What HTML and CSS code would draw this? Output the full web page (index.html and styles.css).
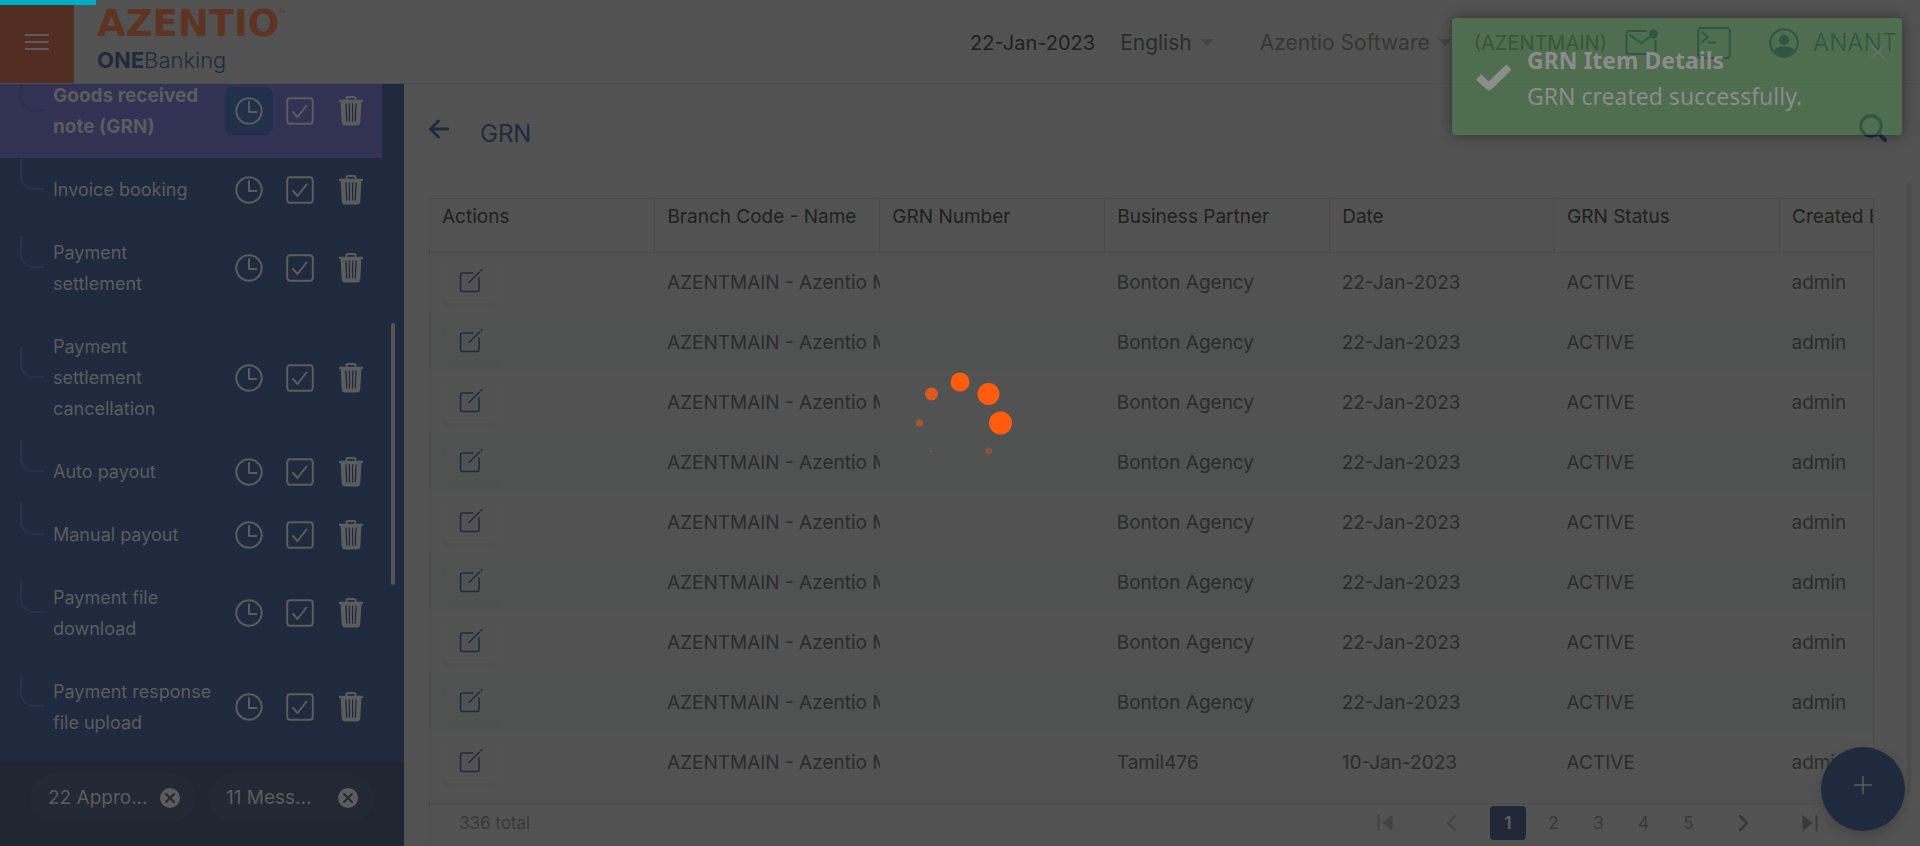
FILE: index.html
```html
<!DOCTYPE html>
<html lang="en">
<head>
<meta charset="utf-8">
<title>GRN - ONEBanking</title>
<link rel="stylesheet" href="styles.css">
</head>
<body>
<svg class="defs" aria-hidden="true">
  <symbol id="clock" viewBox="0 0 28 28"><circle cx="14" cy="14" r="12.7"/><path d="M14 5v10h7.5"/></symbol>
  <symbol id="check" viewBox="0 0 28 28"><rect x="1.2" y="1.2" width="25.600" height="25.600" rx="3"/><path d="M7 15l4.500 5L20.500 8.500"/></symbol>
  <symbol id="trash" viewBox="0 0 28 32"><path d="M9.500 5V3.500Q9.500 2 11 2h6q1.500 0 1.500 1.500V5" fill="none" stroke="currentColor" stroke-width="2"/><path d="M2 4.800h24v2.200h-1.600L23.300 27q-.3 3.500-3.500 3.500H8.200Q5 30.500 4.700 27L3.600 7H2z" fill="currentColor" stroke="none"/><path d="M9 9l.7 17M12.400 9v17M15.600 9v17M19 9l-.7 17" class="slots"/></symbol>
  <symbol id="edit" viewBox="0 0 24 24"><path d="M14 4H3.500Q1.500 4 1.500 6v14.500q0 2 2 2H18q2 0 2-2V9M10 13.500L20.500 3M22 1.500l1-1"/></symbol>
  <symbol id="close" viewBox="0 0 22 22"><circle cx="11" cy="11" r="11"/><path d="M7 7l8 8M15 7l-8 8"/></symbol>
</svg>
<div class="progress"></div>
<header class="topbar">
  <button class="menu" aria-label="Menu"><svg width="24" height="18" viewBox="0 0 24 18"><path d="M0 2h24M0 9h24M0 16h24"/></svg></button>
  <div class="brand">
    <div class="wordmark">AZENTIO<sup>™</sup></div>
    <div class="product"><b>ONE</b>Banking</div>
  </div>
  <div class="session">
    <span class="date">22-Jan-2023</span>
    <button class="language">English <i class="caret"></i></button>
    <button class="company">Azentio Software <i class="caret"></i></button>
    <span class="branch">(AZENTMAIN)</span>
    <button class="tool" aria-label="Messages"><svg width="34" height="28" viewBox="0 0 34 28"><path d="M21 2H4Q1.500 2 1.500 4.500v18Q1.500 25 4 25h24q2.500 0 2.500-2.500V12M5 6l11 8 8-5.500"/><circle cx="28.500" cy="5" r="4.500" fill="currentColor" stroke="none"/></svg></button>
    <button class="tool terminal" aria-label="Terminal"><svg width="34" height="34" viewBox="0 0 34 34"><rect x="1.200" y="2" width="31.600" height="30" rx="3"/><path d="M5 6l6 5-6 5M12 16.500h6"/></svg></button>
    <button class="user"><svg width="30" height="30" viewBox="0 0 30 30"><circle cx="15" cy="15" r="13.700"/><circle cx="15" cy="12" r="5" fill="currentColor" stroke="none"/><path d="M4.500 22Q15 14.500 25.500 22 15 34.500 4.500 22z" fill="currentColor" stroke="none"/></svg>ANANT</button>
  </div>
</header>
<div class="shell">
  <nav class="sidebar">
    <ul class="menu-list" id="menu-list"></ul>
    <div class="scroll-thumb"></div>
    <div class="chips">
      <div class="chip"><span>22 Appro...</span><button aria-label="Close approvals"><svg width="22" height="22"><use href="#close"/></svg></button></div>
      <div class="chip"><span>11 Mess...</span><button aria-label="Close messages"><svg width="22" height="22"><use href="#close"/></svg></button></div>
    </div>
  </nav>
  <main class="content">
    <div class="page-head">
      <button aria-label="Back"><svg width="20" height="20" viewBox="0 0 20 20"><path d="M19 10H2M9.500 2L1.500 10l8 8" stroke-width="2.800"/></svg></button>
      <h1>GRN</h1>
      <button class="search" aria-label="Search"><svg width="28" height="28" viewBox="0 0 28 28"><circle cx="12" cy="12" r="10.200" stroke-width="3"/><path d="M19.500 19.500l6.500 6.500" stroke-width="4"/></svg></button>
    </div>
    <div class="grid-card">
      <table>
        <thead><tr><th>Actions</th><th>Branch Code - Name</th><th>GRN Number</th><th>Business Partner</th><th>Date</th><th>GRN Status</th><th>Created By</th></tr></thead>
        <tbody id="rows"></tbody>
      </table>
      <div class="pager">
        <span class="total">336 total</span>
        <button class="off" aria-label="First page"><svg width="16" height="16" viewBox="0 0 16 16"><path d="M1.500 0v16" stroke-width="2"/><path d="M15.500 0v16L5 8z" fill="currentColor" stroke="none"/></svg></button>
        <button class="off step" aria-label="Previous page"><svg width="10" height="16" viewBox="0 0 10 16"><path d="M9 1L2 8l7 7"/></svg></button>
        <button class="current">1</button>
        <button class="num">2</button>
        <button class="num">3</button>
        <button class="num">4</button>
        <button class="num">5</button>
        <button class="step next" aria-label="Next page"><svg width="10" height="16" viewBox="0 0 10 16"><path d="M1 1l7 7-7 7" stroke-width="2.500"/></svg></button>
        <button aria-label="Last page"><svg width="16" height="16" viewBox="0 0 16 16"><path d="M14.500 0v16" stroke-width="2"/><path d="M.5 0v16L11 8z" fill="currentColor" stroke="none"/></svg></button>
      </div>
    </div>
    <div class="page-thumb"></div>
  </main>
</div>
<button class="fab" aria-label="Add"><svg width="18" height="18" viewBox="0 0 18 18"><path d="M9 0v18M0 9h18"/></svg></button>
<div class="toast" role="status">
  <svg class="tick" width="38" height="28" viewBox="0 0 38 28"><path d="M3.500 14l10.500 9.500L34 4" stroke-width="7.500" stroke-linecap="butt"/></svg>
  <div class="toast-text"><strong>GRN Item Details</strong><span>GRN created successfully.</span></div>
  <button aria-label="Dismiss"><svg width="16" height="16" viewBox="0 0 16 16"><path d="M2 2l12 12M14 2L2 14"/></svg></button>
</div>
<svg class="spinner" width="94" height="94" viewBox="-47 -47 94 94">
  <circle cx="0" cy="-41" r="9.500"/><circle cx="28.500" cy="-29" r="11"/><circle cx="40.500" cy="0" r="11.500"/>
  <circle cx="-28.500" cy="-29" r="6.500" opacity=".8"/><circle cx="-40.500" cy="0" r="3.500" opacity=".5"/><circle cx="-29" cy="28" r="1" opacity=".3"/><circle cx="28.500" cy="28" r="3.500" opacity=".3"/>
</svg>
<script src="app.js"></script>
</body>
</html>
```
FILE: app.js
```js
const items = ["Goods received note (GRN)", "Invoice booking", "Payment settlement", "Payment settlement cancellation", "Auto payout", "Manual payout", "Payment file download", "Payment response file upload"];
const icon = (name, w, h) => `<svg width="${w}" height="${h}"><use href="#${name}"/></svg>`;
document.getElementById("menu-list").innerHTML = items.map((label, i) => `
  <li class="${i === 0 ? "active" : ""}"><i class="branch-line"></i><a href="#">${label}</a>
    <button class="clock" aria-label="Pending">${icon("clock", 28, 28)}</button>
    <button aria-label="Approve">${icon("check", 28, 28)}</button>
    <button aria-label="Delete">${icon("trash", 28, 32)}</button></li>`).join("");

const rows = Array.from({ length: 8 }, () => ["Bonton Agency", "22-Jan-2023"]);
rows.push(["Tamil476", "10-Jan-2023"]);
document.getElementById("rows").innerHTML = rows.map(([partner, date]) => `
  <tr><td><button class="edit" aria-label="Edit">${icon("edit", 24, 24)}</button></td>
  <td>AZENTMAIN - Azentio Main</td><td></td><td>${partner}</td><td>${date}</td><td>ACTIVE</td><td>admin</td></tr>`).join("");
```
FILE: styles.css
```css
:root {
  --page: #525252;
  --navy: #1f2a3f;
  --line: #4a4a4a;
  --light: #5c5c5c;
}
* { box-sizing: border-box; }
body {
  margin: 0;
  height: 100vh;
  display: flex;
  flex-direction: column;
  overflow: hidden;
  background: var(--page);
  color: #2b2b2b;
  font: 19px/24px Inter, "Liberation Sans", sans-serif;
}
button {
  padding: 0;
  border: 0;
  background: none;
  color: inherit;
  font: inherit;
  display: flex;
  align-items: center;
  justify-content: center;
}
svg { display: block; fill: none; stroke: currentColor; stroke-width: 2; stroke-linecap: round; stroke-linejoin: round; }
.defs { position: absolute; width: 0; height: 0; }
.progress { position: absolute; top: 0; left: 0; width: 5%; height: 5px; background: #00adc6; z-index: 3; }

.topbar { flex: none; height: 84px; display: flex; border-bottom: 1px solid #4d4d4d; }
.menu { width: 74px; background: #512d22; color: var(--light); }
.menu svg { stroke-linecap: butt; }
.brand { padding: 6px 0 0 23px; }
.wordmark { font: bold 37px/36px "DejaVu Sans", sans-serif; color: #5f3321; white-space: nowrap; }
.wordmark sup { font: 10px/10px Inter, sans-serif; vertical-align: 18px; }
.product { font-weight: 300; font-size: 22px; line-height: 36px; color: var(--navy); }
.product b { font-weight: 700; }
.session { flex: 1; display: flex; align-items: center; justify-content: flex-end; padding: 2px 23px 0 0; white-space: nowrap; }
.date { font-size: 20px; color: #202020; margin-right: 25px; }
.language { font-size: 21px; margin-right: 46px; }
.company { font-size: 21px; color: #363636; margin-right: 22px; }
.caret { border: 7px solid transparent; border-top-color: #444; border-bottom: 0; margin-left: 8px; }
.branch { font-size: 20px; margin-right: 18px; }
.tool, .user { color: var(--navy); }
.tool { margin-right: 38px; }
.user { gap: 14px; font-size: 24px; font-weight: 300; }

.shell { flex: 1; min-height: 0; display: flex; }
.sidebar { position: relative; width: 404px; flex: none; display: flex; flex-direction: column; background: var(--navy); color: var(--light); }
.menu-list { flex: 1; min-height: 0; margin: 0; padding: 0 22px 8px 0; list-style: none; display: flex; flex-direction: column; justify-content: flex-end; overflow: hidden; }
.menu-list li { position: relative; flex: none; display: flex; align-items: center; padding: 16px 4px 16px 53px; }
.menu-list a { flex: 1; padding-right: 8px; color: inherit; text-decoration: none; line-height: 31px; font-size: 18px; }
.menu-list button { width: 48px; height: 48px; margin: -9px 3px -9px 0; border-radius: 8px; flex: none; }
.menu-list .active { background: #323254; font-weight: 700; }
.menu-list .active a { font-size: 19px; }
.active .clock { background: #21304b; }
.slots { stroke: var(--navy); stroke-width: 1.3; }
.branch-line { position: absolute; left: 20px; bottom: 50%; width: 24px; height: 32px; border: solid #283149; border-width: 0 0 2px 2px; border-radius: 0 0 0 14px; }
.scroll-thumb { position: absolute; right: 9px; top: 239px; width: 4px; height: 262px; border-radius: 2px; background: #555; }
.chips { flex: none; height: 84px; display: flex; align-items: flex-start; gap: 12px; padding: 12px 30px; background: #202632; }
.chip { flex: 1; height: 48px; display: flex; align-items: center; justify-content: space-between; padding: 0 15px 0 18px; border-radius: 24px; background: #222935; }
.chip svg { fill: var(--light); stroke: none; }
.chip use { stroke: #222935; stroke-width: 2; }

.content { position: relative; flex: 1; min-width: 0; display: flex; flex-direction: column; padding: 0 46px 0 25px; }
.page-head { height: 114px; flex: none; display: flex; align-items: center; padding-bottom: 14px; color: var(--navy); }
.page-head button { margin-bottom: 11px; }
.page-head h1 { flex: 1; margin: 0 0 0 31px; font-weight: 400; font-size: 24px; line-height: 28px; }
.page-head .search { margin: 0 -13px 12px 0; }
.grid-card { flex: 1; min-height: 0; display: flex; flex-direction: column; border: 1px solid var(--line); border-bottom: 0; overflow: hidden; }
table { width: 1575px; flex: none; table-layout: fixed; border-collapse: collapse; margin-bottom: 11px; }
th { height: 53px; padding: 6px 0 4px 12px; vertical-align: top; text-align: left; font-weight: 400; color: #202020; border: solid var(--line); border-width: 0 1px 1px 0; white-space: nowrap; overflow: hidden; }
td { height: 60px; padding: 2px 0 0 12px; white-space: nowrap; overflow: hidden; }
tbody tr:nth-child(even) { background: #505251; }
.edit { width: 52px; height: 40px; margin-left: 3px; padding-bottom: 5px; border-radius: 4px; color: var(--navy); box-shadow: 0 2px 3px #4f4f4f; }
.edit svg { stroke-width: 1.5; }
.pager { flex: 1; display: flex; align-items: flex-start; padding: 2px 55px 0 29px; border-top: 1px solid var(--line); font-size: 17px; color: #383838; }
.pager > * { height: 34px; line-height: 34px; }
.total { flex: 1; }
.pager .off { color: #424242; }
.pager .off.step { margin: 0 34px 0 53px; }
.pager .current { width: 36px; border-radius: 4px; background: #202736; color: var(--light); font-weight: 700; margin-right: 5px; }
.num { width: 45px; }
.pager .next { margin: 0 53px 0 28px; }
.page-thumb { position: absolute; right: 9px; top: 99px; bottom: 52px; width: 4px; background: #4c4c4c; }

.fab { position: absolute; right: 15px; bottom: 15px; width: 84px; height: 84px; border-radius: 50%; padding-bottom: 8px; background: var(--navy); color: var(--light); box-shadow: 0 5px 10px #444; }
.fab svg { stroke-width: 1.5; }
.toast { position: absolute; top: 18px; right: 18px; width: 450px; height: 117px; display: flex; border-radius: 4px; background: rgba(77, 155, 77, .38); box-shadow: 0 0 14px rgba(0, 0, 0, .4); color: #8c8c8c; font: 23px/36px "Noto Sans", sans-serif; padding: 24px 16px 0 23px; }
.tick { margin: 21px 14px 0 0; }
.toast-text { flex: 1; display: flex; flex-direction: column; }
.toast button { height: 20px; color: #627262; }
.spinner { position: absolute; left: 50%; top: 50%; margin: -47px; overflow: visible; fill: #ff5c10; stroke: none; }
```
